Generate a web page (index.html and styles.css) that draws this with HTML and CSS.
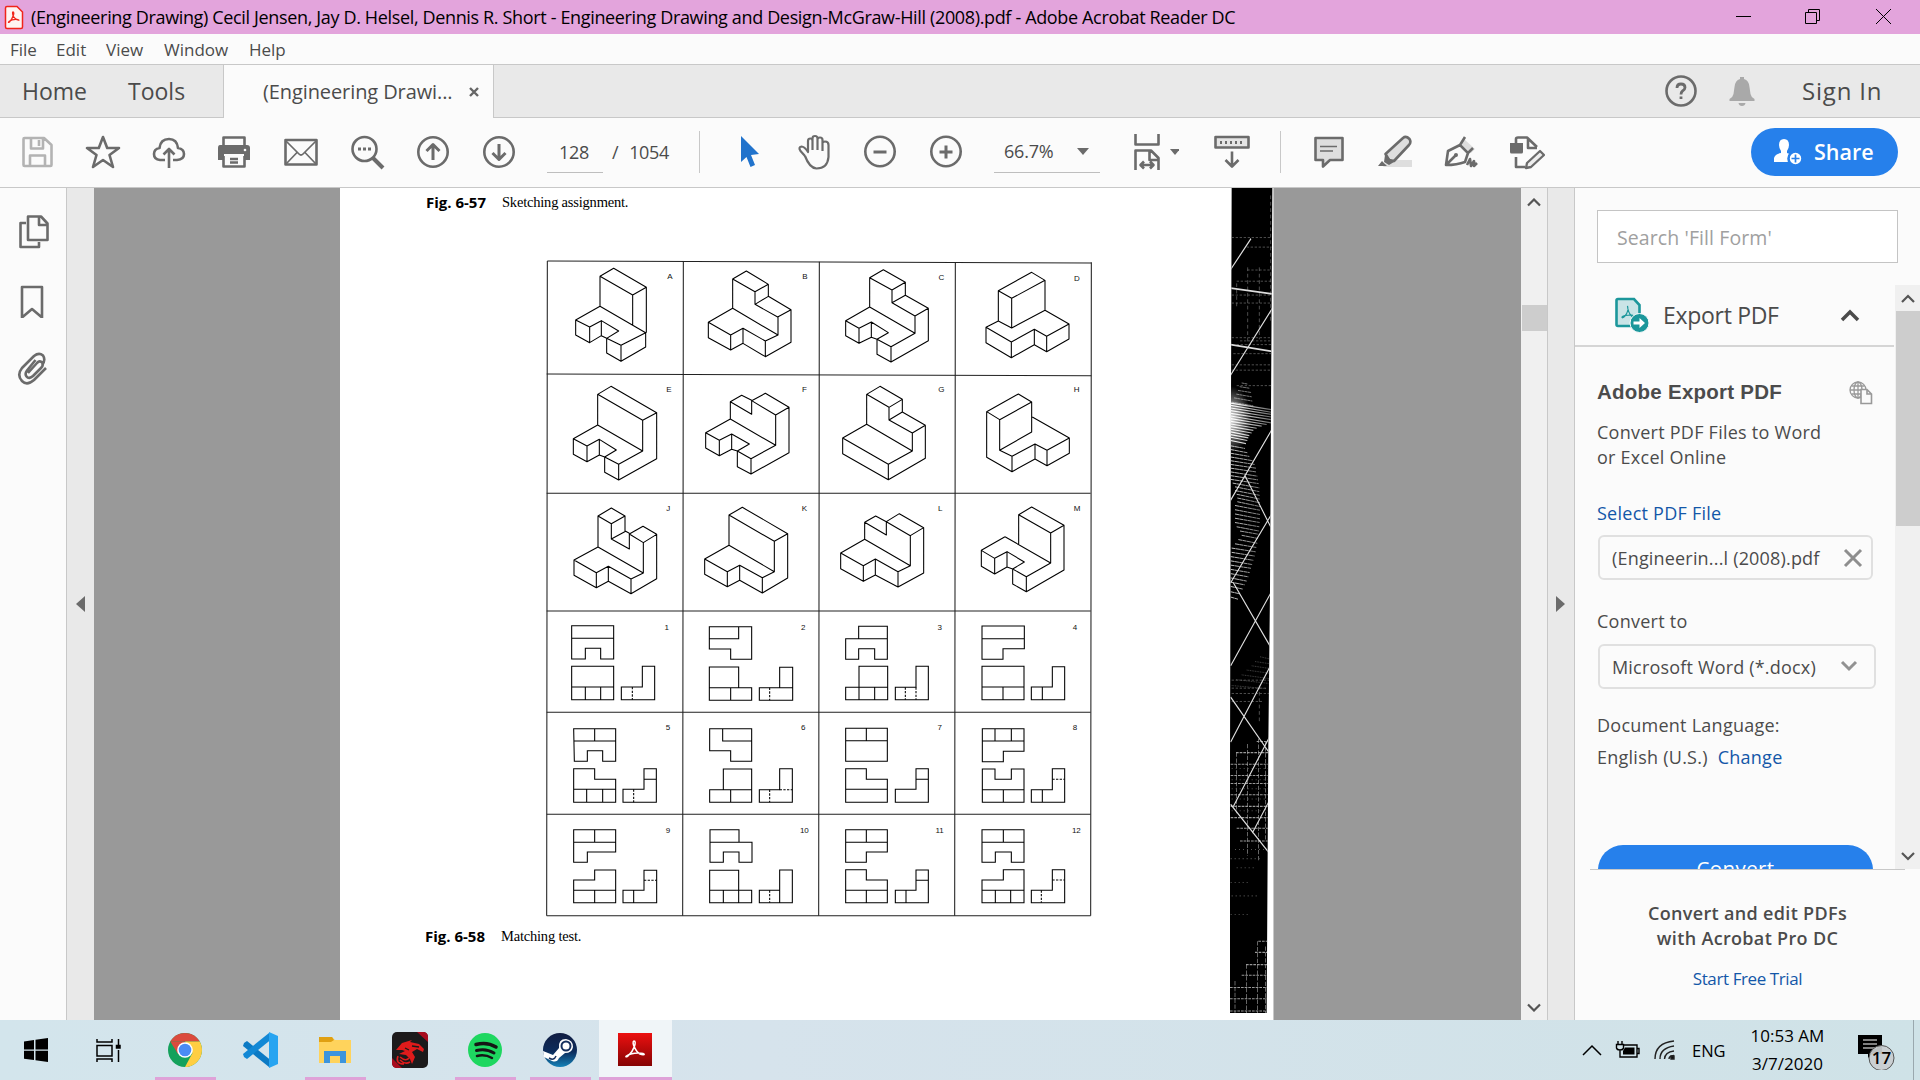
FILE: index.html
```html
<!DOCTYPE html>
<html lang="en">
<head>
  <meta charset="UTF-8" />
  <title>Adobe Acrobat Reader DC</title>
  <link rel="stylesheet" href="styles.css">
</head>
<body>
  <header class="titlebar">
    <svg class="app-icon" width="20" height="25" viewBox="0 0 20 25"><path d="M3 1.500H13L18.500 7V22Q18.500 23.500 17 23.500H3Q1.500 23.500 1.500 22V3Q1.500 1.500 3 1.500Z" fill="#fff4f2" stroke="#f0241b" stroke-width="1.500"/><path d="M9 7C11 7 9 13 5.500 17C3 19 5 14 13 14.500C18 15.500 12 16 9.500 11.500C8.500 9.500 8.300 7 9 7Z" fill="none" stroke="#f0241b" stroke-width="1.300"/></svg>
    <span class="title">(Engineering Drawing) Cecil Jensen, Jay D. Helsel, Dennis R. Short - Engineering Drawing and Design-McGraw-Hill (2008).pdf - Adobe Acrobat Reader DC</span>
    <svg class="win-buttons" width="190" height="34" fill="none" stroke="#000"><path d="M16 16.500H31M85.500 12.500H96.500V23.500H85.500ZM88.500 12V9.500H99.500V20.500H97M156 9L171 24M171 9L156 24"/></svg>
  </header>

  <nav class="menubar">
    <span class="m-file">File</span><span class="m-edit">Edit</span><span class="m-view">View</span><span class="m-window">Window</span><span class="m-help">Help</span>
  </nav>

  <div class="tabs">
    <span class="home">Home</span>
    <span class="tools">Tools</span>
    <div class="tab"><span>(Engineering Drawi...</span>
      <svg width="12" height="12" stroke="#666" stroke-width="2.400"><path d="M2 2L10 10M10 2L2 10"/></svg>
    </div>
    <div class="account">
      <svg width="34" height="34" fill="none" stroke="#6b6b6b" stroke-width="2.600"><circle cx="17" cy="17" r="14.500"/><path d="M13 14Q13 10 17 10Q21 10 21 13.500Q21 15.500 18.500 17Q17 18 17 20.500M17 22.500V25" stroke-width="2.800"/></svg>
      <svg width="28" height="34" fill="#a9a9a9"><path d="M12 3H16V5Q21 6.500 21.500 13L22.500 20Q23 23 26.500 25V27H1.500V25Q5 23 5.500 20L6.500 13Q7 6.500 12 5ZM10.500 29H17.500Q17 32 14 32Q11 32 10.500 29Z"/></svg>
      <span class="signin">Sign In</span>
    </div>
  </div>

  <div class="toolbar">
    <div class="tool-group first">
      <svg viewBox="0 0 36 36" class="disabled"><path d="M4.500 5Q4.500 4 5.500 4H25L32.500 11V31Q32.500 32 31.500 32H5.500Q4.500 32 4.500 31ZM12 4V14.500H24V4M20 6V12M11 32V21.500H26V32"/></svg>
      <svg viewBox="0 0 36 36"><path d="M18 3L22.200 14H34L24.500 21L28 33L18 26L8 33L11.500 21L2 14H13.800Z"/></svg>
      <svg viewBox="0 0 36 36"><path d="M14 26H9Q3 25.500 3 20Q3 15 8.500 14Q9.500 5 18 5Q26 5 27 14Q33 15 33 20Q33 25.500 26 26H22M18 34V15M12.500 20.500L18 15L23.500 20.500"/></svg>
      <svg viewBox="1 0 36 36"><path class="solid" d="M4 11Q2 11 2 14V26H8V20H28V26H34V14Q34 11 31 11Z"/><path d="M7.500 12V3.500H28.500V12M7.500 22V32.500H28.500V22M14 25H22M14 28.500H22"/><circle cx="29" cy="16" r="1.300" fill="#fbfbfb" stroke="none"/></svg>
      <svg viewBox="0 0 36 36"><path d="M2.500 6H33.500V30.500H2.500Z"/><path class="thin" d="M3 7L16 20Q18 22 20 20L33 7M3 30L14 18.500M33 30L22 18.500"/></svg>
      <svg viewBox="0 0 36 36"><circle cx="15.500" cy="15" r="12"/><path d="M24 24L34 34" stroke-width="4"/><path class="solid" d="M9 13.500h3v3H9zm5 0h3v3h-3zm5 0h3v3h-3z"/></svg>
      <svg viewBox="0 0 36 36"><circle cx="18" cy="18" r="14.700"/><path d="M18 26V11M11.500 17L18 10.500L24.500 17" stroke-width="3"/></svg>
      <svg viewBox="0 0 36 36"><circle cx="18" cy="18" r="14.700"/><path d="M18 10V25M11.500 19L18 25.500L24.500 19" stroke-width="3"/></svg>
    </div>
    <div class="page-number">128</div>
    <div class="page-count"><span>/</span><span>1054</span></div>
    <div class="tool-group middle">
      <svg viewBox="-2 0 36 36"><path d="M9 2L27 20L19 21L23 31L18.500 33L14.500 23L9 28Z" fill="#2173cc" stroke="none"/></svg>
      <svg viewBox="-1.500 0 36 36"><path class="hand" d="M7.500 22L3 17Q.500 13 4 12.500Q7 12.500 10.500 18V7Q10.500 4.500 13 4.500Q15 4.500 15 7V16M15 16V4.500Q15 2 17.500 2Q20 2 20 4.500V16M20 5.500Q20 3.500 22.500 3.500Q25 3.500 25 6V17M25 9Q25 7.500 27.500 7.500Q31 7.500 31 11V23Q30 34.500 19 34.500Q12 34 7.500 22"/></svg>
      <svg viewBox="0 0 36 36"><circle cx="18" cy="17.500" r="14.700"/><path d="M11.500 18H24.500" stroke-width="3"/></svg>
      <svg viewBox="0 0 36 36"><circle cx="18" cy="17.500" r="14.700"/><path d="M11.500 18H24.500M18 11.500V24.500" stroke-width="3"/></svg>
    </div>
    <div class="zoom"><span>66.7%</span><i class="caret"></i></div>
    <svg class="fit" width="46" height="38" viewBox="0 0 46 38"><path d="M2.500 1V11.500H25.500V1M2.500 37V17.500H18L25.500 25V37M16.500 18V27H25M8 32H20M11 28.500L7.500 32L11 35.500M17 28.500L20.500 32L17 35.500"/><path d="M37 16H47L42 22Z" class="solid"/></svg>
    <svg class="keyboard" width="38" height="38" viewBox="0 0 38 38"><path fill="#e5e5e5" d="M2.500 4H35.500V14.500H2.500Z"/><path d="M7 9.500H31" stroke-dasharray="2 3" stroke-width="3"/><path d="M19 18.500V33M12.500 27L19 33.500L25.500 27"/></svg>
    <div class="tool-group last">
      <svg viewBox="0 0 36 36"><path fill="#dedede" d="M4.500 4H31.500V26H19L12 32.500V26H4.500Z"/><path class="thin" d="M9 12.500H26M9 17H22"/></svg>
      <svg viewBox="0 0 36 36"><path d="M11 26H35V33H6Z" fill="#dedede" stroke="none"/><path fill="#dedede" d="M8.500 20L26 4Q29 1.500 32.500 5Q34.500 8 32 11L17 27L12 26Z"/><path class="solid" d="M8 21L17 28L12 31L7 28ZM5 27L10 32H1Z"/></svg>
      <svg viewBox="1 0 36 36"><path fill="#dedede" stroke="none" d="M22 5L33 15L29 19L19 10Z"/><path d="M4 31L6 17L18 11L26 19L23 28Q15 31 4 31ZM5 30L14 21M18 11L23 3M26 19L31 14M25 31L28 25L29 32L32 27L32 32L35 29"/><circle class="solid" cx="14" cy="21" r="2"/></svg>
      <svg viewBox="1 0 36 36"><path d="M8 9V5Q8 3.500 10 3.500H19L29 13M20 4V14H29M8 23V33H17"/><path class="solid" d="M2 9H15V18Q15 19.500 13.500 19.500H3.500Q2 19.500 2 18Z"/><path fill="#eee" d="M19 29L32 17L36 21L23 33L18 34Z" stroke-width="2.300"/></svg>
    </div>
    <button class="share">
      <svg width="30" height="28" viewBox="0 0 30 28"><path fill="#fff" d="M10 1Q15 1 15 7Q15 10 13 13V15Q17 16 18 18Q15 20 15 24H0V20Q1 16 7 15V13Q5 10 5 7Q5 1 10 1Z"/><circle cx="21.500" cy="20.500" r="7" fill="#fff" stroke="#2680eb"/><path d="M21.500 16.500V24.500M17.500 20.500H25.500" stroke="#2680eb" stroke-width="1.700"/></svg>
      <span>Share</span>
    </button>
  </div>

  <main class="workspace">
    <aside class="rail">
      <svg width="34" height="36" viewBox="0 0 34 36"><path d="M9 10H3.500V34H22V29M11 3.500H24L30.500 10.500V27H11ZM22 4V12H30"/></svg>
      <svg width="34" height="36" viewBox="0 -2 34 36"><path d="M5 3H25V33.500L15 25L5 33.500Z"/></svg>
      <svg width="34" height="36" viewBox="0 0 34 36"><path d="M11 22L20 12Q23 9 25 11.500Q27 14 24 17L16 25Q12 28.500 9.500 25.500Q7.500 23 10 19.500L18.500 9M29 17L17 29Q10 35 5 30Q-.500 24 5 17L17 5Q22 1 26 4.500Q29 9 25 14" /></svg>
    </aside>
    <div class="strip"><i class="arrow-left"></i></div>

    <section class="viewer">
      <article class="page">
        <div class="sheet">
          <p class="caption top"><b>Fig. 6-57</b><span>Sketching assignment.</span></p>
          <svg class="figure" width="560" height="670" viewBox="0 0 1680 2010">
            <!-- table rules -->
            <g class="rules">
              <path d="M22 18L1654 24M20 357L1654 362M20 715H1652M20 1068H1652M20 1372H1652M20 1678H1652M20 1982H1652"/>
              <path d="M22 18L20 1982M430 19L428 1982M838 20L836 1982M1246 21L1244 1982M1654 22L1652 1982"/>
            </g>
            <!-- pictorial views, first two columns -->
            <g class="solids">
              <path d="M180 64L221 40L319 97L278 120ZM180 64V154L107 195V240L149 263V216L107 195M180 154L317 233V276L243 319V271L317 233M319 97V233M278 120V209M149 216L184 197V242L149 263M184 197L236 228L200 250V294L243 319M200 250L243 271M184 242L200 250"/>
              <path d="M578 72L619 48L685 88L645 110ZM645 110V148L713 186L753 164L685 124L645 148M685 88V124M578 72V160L505 202V248L572 285V240L505 202M578 160L714 240V186M753 164V262L676 305V258L714 240M572 240L609 220L676 258M572 285L609 265L676 305M609 220V265"/>
              <path d="M173 418L213 394L350 473L308 496ZM173 418V510L100 551V598L141 620V573L100 551M173 510L308 588V496M350 473V611L236 675V628L308 588M141 573L178 553V600L141 620M178 553L229 585L194 606V652L236 675M194 606L236 628M178 600L194 606"/>
              <path d="M571 440L605 421L635 436V478L571 440V492L497 533V579L538 602V556L497 533M635 437L676 415L747 457L707 480ZM707 480V571L571 492M747 457V593L633 657V611L707 571M538 556L575 537V583L538 602M575 537L628 567L592 588V635L633 657M592 588L633 611M575 583L592 588"/>
              <path d="M174 783L214 759L255 783L214 806ZM214 806V852L268 882V837L310 863L350 838L309 814L268 837M255 783V830M214 852L257 829L268 835M174 783V876L102 915V961L169 998V953L102 915M174 876L310 954V863M350 838V971L273 1016V972L310 954M169 953L205 934L273 972M169 998L205 979L273 1016M205 934V979"/>
              <path d="M567 780L607 757L743 836L703 859ZM567 780V871L494 912V958L562 995V950L494 912M567 871L703 950V859M743 836V969L667 1014V968L703 950M562 950L599 931L667 968M562 995L599 976L667 1014M599 931V976"/>
            </g>
            <!-- last two columns -->
            <g class="solids" transform="translate(825 0)">
              <path d="M164 68L205 44L271 82L231 105ZM271 82V121L231 143V105M231 143L300 183L340 160L271 121M164 68V156L92 197V242L132 265V220L92 197M164 156L300 235V183M340 160V257L228 321V275L300 235M132 220L169 201V247L132 265M169 201L220 233L186 253V298L228 321M186 253L228 275M169 247L186 253"/>
              <path d="M550 107L650 52L690 76L590 130ZM550 107V198L590 219V130M690 76V166L590 219M550 198L513 217V263L589 308V261L513 217M690 166L762 207V252L695 290V244L762 207M589 261L658 223L695 244M589 308L658 269L695 290M658 223V269"/>
              <path d="M155 418L195 394L262 433L222 457ZM262 433V471L222 495V457M222 495L292 534L331 511L262 471M155 418V508L83 549V596L220 674V628L83 549M155 508L292 588V534M331 511V610L220 674M220 628L292 588"/>
              <path d="M515 470L610 417L650 441L554 494ZM515 470V607L591 650V604L554 586V494M650 441V531L554 586M652 486L763 549V595L696 632V586L763 549M591 604L660 567L696 586M591 650L660 612L696 632M660 567V612"/>
              <path d="M149 802L182 783L214 800V840L149 802V853L77 894V941L145 979V932L77 894M214 800L253 776L326 818L286 842ZM286 842V932L149 853M326 818V954L249 996V950L286 932M145 932L181 912L249 950M145 979L181 960L249 996M181 912V960"/>
              <path d="M611 779L650 756L747 811L707 834ZM611 779V867M570 845L707 924V834M570 845L499 886V934L539 957V910L499 886M747 811V945L634 1010V965L707 924M539 910L576 890V936L539 957M576 890L628 921L593 942V987L634 1010M593 942L634 965M576 936L593 942"/>
            </g>
            <!-- orthographic views -->
            <g class="ortho" transform="translate(0 1050)">
              <path d="M95 62H221V162H182V130H136V162H95ZM95 100H221M95 184H221V284H95ZM95 246H221M136 246V284M182 246V284M307 184H344V284H244V246H307Z"/>
              <path d="M508 65H635V163H572V132H508ZM508 101H596V65M596 248V186H508V286H635V248H508M572 248V286M719 187H758V286H658V248H719ZM719 248H758"/>
              <path d="M101 371H227V469H188V437H142V469H103ZM103 408H227M164 371V408M101 491H164V523H227V592H101ZM101 553H227M140 553V592M188 553V592M312 491H349V592H249V553H312ZM312 523H349"/>
              <path d="M509 371H635V469H572V437H509ZM548 371V408H635M550 554V492H635V592H509V554H635M572 554V592M719 491H757V592H658V554H719Z"/>
              <path d="M101 674H227V741H142V772H101ZM101 712H227M164 674V712M101 825H164V795H227V893H101ZM101 856H227M164 856V893M312 796H350V893H249V856H312ZM281 856V893"/>
              <path d="M510 674H597V712H636V772H597V741H550V772H510ZM510 712H597M509 796H596V856H635V893H509ZM509 856H596M550 856V893M596 856V893M719 795H757V893H658V856H719ZM719 856V893"/>
              <path class="hidden-edge" d="M277 246V284M689 248V286M281 553V592M689 554V592M719 554H757M312 826H350M689 856V893"/>
            </g>
            <g class="ortho" transform="translate(825 1050)">
              <path d="M131 64H217V163H179V131H131V163H92V101H131ZM131 101H217M132 184H218V284H92V247H132ZM132 247H218M132 247V284M179 247V284M303 184H340V284H241V247H303Z"/>
              <path d="M501 63H628V131H564V163H501ZM501 101H628M501 184H627V284H501ZM501 246H627M564 246V284M712 185H749V284H649V246H712ZM682 246V284"/>
              <path d="M92 370H217V469H92ZM92 407H217M154 370V407M92 491H154V523H217V592H92ZM92 553H217M303 491H340V592H241V553H303ZM303 523H340"/>
              <path d="M502 371H627V439H565V470H502ZM502 408H627M540 371V408M589 371V408M502 492H540V523H589V492H627V592H502ZM502 554H627M565 554V592M712 491H749V592H649V554H712ZM682 554V592"/>
              <path d="M92 674H217V741H154V772H92ZM92 712H217M154 674V712M92 794H154V825H217V893H92ZM92 856H217M154 856V893M303 795H340V893H241V856H303ZM303 826H340M273 856V893"/>
              <path d="M501 674H627V772H589V741H541V772H501ZM501 712H627M565 674V712M501 825H565V794H627V893H501ZM501 856H627M541 856V893M587 856V893M712 794H749V893H649V856H712Z"/>
              <path class="hidden-edge" d="M271 247V284M303 247V284M712 523H749M679 856V893M712 825H749"/>
            </g>
            <g class="cell-labels">
              <text x="390" y="72">A</text><text x="795" y="72">B</text><text x="1204" y="75">C</text><text x="1611" y="77">D</text>
              <text x="387" y="410">E</text><text x="793" y="411">F</text><text x="1204" y="412">G</text><text x="1610" y="412">H</text>
              <text x="385" y="768">J</text><text x="793" y="768">K</text><text x="1201" y="769">L</text><text x="1611" y="769">M</text>
              <text x="380" y="1124">1</text><text x="790" y="1124">2</text><text x="1199" y="1124">3</text><text x="1605" y="1124">4</text>
              <text x="384" y="1425">5</text><text x="790" y="1425">6</text><text x="1199" y="1425">7</text><text x="1605" y="1425">8</text>
              <text x="384" y="1734">9</text><text x="793" y="1734">10</text><text x="1199" y="1734">11</text><text x="1609" y="1734">12</text>
            </g>
          </svg>
          <p class="caption bottom"><b>Fig. 6-58</b><span>Matching test.</span></p>
        </div>
        <svg class="scan-edge" width="43" height="832" viewBox="60 6 129 1562" preserveAspectRatio="none">
          <defs>
            <linearGradient id="glow" gradientUnits="userSpaceOnUse" x1="62" x2="186" y1="0" y2="0"><stop offset="0" stop-color="#fff"/><stop offset=".45" stop-color="#bbb"/><stop offset="1" stop-color="#666"/></linearGradient>
            <radialGradient id="flare" gradientUnits="userSpaceOnUse" cx="62" cy="440" r="62"><stop offset="0" stop-color="#fff" stop-opacity=".9"/><stop offset="1" stop-color="#fff" stop-opacity="0"/></radialGradient>
            <clipPath id="edge"><path d="M65 6H187L183 420L180 760L175 1050L170 1555H58L62 600Z"/></clipPath>
          </defs>
          <path d="M65 6H187L183 420L180 760L175 1050L170 1555H58L62 600Z"/>
          <g clip-path="url(#edge)" fill="none" stroke="#ddd">
            <!-- faint grids -->
            <g stroke="#777" stroke-width="1.500" stroke-dasharray="7 5">
              <path d="M65 99H180M110 117H185M112 160H185M80 181H185M65 207H185M65 222H180M65 287H185M90 293H185M80 300H185M70 317H185M65 338H185M65 348H185M80 377H185M65 930H178M65 945H170M65 955H180M65 970H160"/>
              <path d="M80 185V230M113 155V300M148 155V290M182 20V260M148 940V1010"/>
            </g>
            <g stroke="#999" stroke-width="2" stroke-dasharray="8 3">
              <path d="M140 1045H176M78 1066H176M62 1088H176M62 1109H176M62 1124H176M62 1145H176M62 1167H176M62 1188H176M80 1208H176M90 1232H175"/>
              <path d="M79 1066V1180M113 1050V1260M146 1040V1270M167 1045V1230"/>
              <path d="M145 1420H172M135 1441H172M108 1464H172M95 1484H172M60 1507H172M60 1528H172M60 1551H172M75 1495V1555M109 1464V1555M143 1420V1555M167 1430V1555"/>
            </g>
            <g stroke="#555" stroke-width="2" stroke-dasharray="3 9"><path d="M65 1096H175M65 1117H175M65 1134H175M65 1153H175M65 1175H175M75 1248H170M62 1265H150M80 1282H140M62 1310H120M65 1335H140M62 1370H120"/></g>
            <!-- hatched shading -->
            <path stroke="#aaa" stroke-width="1.600" stroke-dasharray="9 1" d="M95 372L112 374M89 379L119 382M84 386L124 390M79 393L125 398M72 400L127 406M65 408L130 415"/>
            <path stroke="url(#glow)" stroke-width="2.200" d="M62 410L184 422M62 414L184 427M62 419L184 431M62 424L184 436M62 429L184 441M62 434L184 447M62 439L170 450M62 444L155 453M62 449L140 457M62 454L130 461M62 459L125 466M62 464L118 471M62 469L115 475M62 474L112 480M62 480L108 486"/>
            <path stroke="url(#glow)" stroke-width="1.800" stroke-dasharray="12 1" d="M62 490L105 495M62 497L112 503M62 504L118 510M62 511L128 518M62 518L134 525M62 525L138 532M62 532L138 539M62 539L142 547M62 546L144 554M62 553L146 561M68 560L148 569M75 567L148 576M75 574L149 583M80 581L149 590M82 588L150 597M82 595L150 604M75 602L150 611M75 610L150 619M75 618L150 627M75 626L149 634M75 634L148 642M80 642L147 650M90 650L145 656M95 658L144 664M85 666L142 673M75 674L140 681M65 682L137 689M65 690L134 697M62 698L130 705M62 706L127 713M62 714L123 720M62 722L119 728M62 730L115 736M62 738L110 744M62 746L104 751M62 754L98 759M62 764L90 768M62 774L84 778"/>
            <path stroke="#777" stroke-width="1.200" stroke-dasharray="3 2" d="M150 886L178 890M135 895L178 899M125 903L178 908M110 911L178 917M95 920L178 927M78 929L175 936M65 940L170 946"/>
            <path fill="url(#flare)" stroke="none" d="M62 375H130V505H62Z"/>
            <!-- long construction lines -->
            <path stroke-width="3" d="M62 159L123 101M62 194L188 205M62 300L188 313M62 357L188 231M62 592L188 457M62 747L188 615M62 903L188 760M62 1046L188 895M70 1167L180 1035M127 1217L180 1154M105 546L182 642M70 747L182 868M62 962L182 1070M62 1163L182 1258"/>
          </g>
        </svg>
      </article>
    </section>
    <div class="scrollbar">
      <svg width="14" height="9"><path d="M1 7.500L7 1.500L13 7.500"/></svg>
      <i class="thumb"></i>
      <svg width="14" height="9"><path d="M1 1.500L7 7.500L13 1.500"/></svg>
    </div>
    <div class="strip right"><i class="arrow-right"></i></div>

    <aside class="panel">
      <div class="search">Search 'Fill Form'</div>
      <div class="panel-body">
        <div class="panel-scroll">
          <div class="export-head">
            <svg width="34" height="36" viewBox="0 0 34 36"><path d="M3 2H19L24.500 8V29H3Q1.500 29 1.500 27.500V3.500Q1.500 2 3 2Z" fill="#c9e4e6" stroke="#1c979b" stroke-width="2.600"/><path d="M12.500 9Q14 14 10 19Q7 22 7 20Q8 18 17 18Q20 19 17 19.500Q13 16 12.500 9Z" fill="none" stroke="#1c979b" stroke-width="1.200"/><circle cx="24.500" cy="26" r="9.500" fill="#1c979b" stroke="#fbfbfb"/><path d="M18.500 24.500H24.500V21L30 26L24.500 31V27.500H18.500Z" fill="#fff"/></svg>
            <span>Export PDF</span>
            <svg class="collapse" width="20" height="13"><path d="M2 11L10 3L18 11" fill="none" stroke="#4b4b4b" stroke-width="3.500"/></svg>
          </div>
          <div class="export-form">
            <div class="export-title"><b>Adobe Export PDF</b>
              <svg width="24" height="24" fill="none" stroke="#999" stroke-width="1.300"><circle cx="9" cy="9" r="8"/><ellipse cx="9" cy="9" rx="4" ry="8"/><path d="M9 1V17M1 9H17M2.500 5H15.500M2.500 13H15.500"/><path d="M12 8.500H18L22.500 13V22.500H12ZM18 9V13H22" fill="#fbfbfb" stroke-width="1.600"/></svg>
            </div>
            <p class="intro">Convert PDF Files to Word<br>or Excel Online</p>
            <a class="select-file">Select PDF File</a>
            <div class="field file"><span>(Engineerin...l (2008).pdf</span>
              <svg width="20" height="20" stroke="#8e8e8e" stroke-width="3"><path d="M2 2L18 18M18 2L2 18"/></svg></div>
            <label>Convert to</label>
            <div class="field format"><span>Microsoft Word (*.docx)</span>
              <svg width="18" height="13" fill="none" stroke="#929292" stroke-width="3"><path d="M2 2L9 9L16 2"/></svg></div>
            <p class="language">Document Language:</p>
            <p class="language second">English (U.S.) <a>Change</a></p>
            <button class="convert">Convert</button>
          </div>
        </div>
        <div class="panel-bar">
          <svg width="14" height="10"><path d="M1 8L7 2L13 8"/></svg>
          <i class="thumb"></i>
          <svg width="14" height="10"><path d="M1 2L7 8L13 2"/></svg>
        </div>
      </div>
      <div class="promo">
        <b>Convert and edit PDFs<br>with Acrobat Pro DC</b>
        <a>Start Free Trial</a>
      </div>
    </aside>
  </main>

  <footer class="taskbar">
    <div class="task start"><svg width="24" height="24"><path d="M0 3.500L10 2V11.500H0ZM11.500 1.800L24 0V11.500H11.500ZM0 12.800H10V22L0 20.700ZM11.500 12.800H24V24L11.500 22.200Z"/></svg></div>
    <div class="task view"><svg width="26" height="25" fill="none" stroke="#000" stroke-width="1.500"><path d="M1 1V4H16V1M1 7.500H16V18H1ZM1 24V21H16V24M22.500 1V7M22.500 12V24"/><path d="M20.500 7.500H24V10H20.500Z" fill="#000"/></svg></div>
    <div class="task running"><svg width="34" height="34" viewBox="0 0 34 34"><circle cx="17" cy="17" r="17" fill="#14a15c"/><path d="M2.300 8.500A17 17 0 0 1 31.700 8.500H17Z" fill="#db4a3d"/><path d="M2.300 8.500L10 21L17 8.500Z" fill="#db4a3d"/><path d="M31.700 8.500A17 17 0 0 1 17 34L24.500 20L17 8.500Z" fill="#ffce42"/><circle cx="17" cy="17" r="7.800" fill="#fff"/><circle cx="17" cy="17" r="6.300" fill="#4a8bf5"/></svg></div>
    <div class="task"><svg width="36" height="36" viewBox="0 0 36 36"><path d="M2 11L5 9L31 30L27 35L1 14Z" fill="#0c7ac4"/><path d="M2 25L5 27L31 6L27 1L1 22Z" fill="#1288d5"/><path d="M27 0L36 4V32L27 36Z" fill="#27a4f1"/></svg></div>
    <div class="task running"><svg width="32" height="27"><path d="M0 0H13L16 3H32V26H0Z" fill="#ffd35c"/><path d="M0 0H13L15 3L12 5H0Z" fill="#e0a012"/><path d="M5 14H27V26H21V19H11V26H5Z" fill="#3c94dc"/></svg></div>
    <div class="task"><svg width="36" height="36"><rect width="36" height="36" rx="5" fill="#1c1a1b"/><path d="M25 0H31Q36 0 36 5V10ZM0 26L10 36H5Q0 36 0 31Z" fill="#a90b1e"/><path d="M4 18L10 11L20 8L18 10L27 12L32 17L31 20L25 17L20 20L23 25L20 32L18 27L14 23L7 22L13 19L10 18Z" fill="#e01b1b"/><path d="M6 24Q3 32 12 32M8 25Q14 30 17 26M8 28Q13 33 18 30" fill="none" stroke="#e01b1b" stroke-width="1.600"/><path d="M20 14L27 15M17 18L13 16" stroke="#1c1a1b" stroke-width="1.300"/></svg></div>
    <div class="task running"><svg width="34" height="34" fill="none" stroke="#151515" stroke-linecap="round"><circle cx="17" cy="17" r="17" fill="#1ed760" stroke="none"/><path d="M8 11.500Q19 8.500 28 14" stroke-width="3.500"/><path d="M8.500 17.500Q18 15 26 20" stroke-width="3"/><path d="M9 23Q17 21 24 25" stroke-width="2.500"/></svg></div>
    <div class="task running"><svg width="36" height="34"><defs><linearGradient id="steam" x2="0" y2="1"><stop stop-color="#111d42"/><stop offset=".55" stop-color="#0c2c5c"/><stop offset="1" stop-color="#1582b8"/></linearGradient></defs><circle cx="18" cy="17" r="17" fill="url(#steam)"/><path d="M1 18L11 22L17 15Q16 6 24 6Q31 7 31 14Q30 20 23 20L17 25Q15 30 10 28L2 24Z" fill="#fff"/><circle cx="24" cy="13" r="4.500" fill="#fff" stroke="#17315f" stroke-width="2"/><path d="M7 25Q12 28 14 23" fill="none" stroke="#17315f" stroke-width="1.500"/></svg></div>
    <div class="task running active"><svg width="34" height="34"><defs><linearGradient id="adobe" x2="0" y2="1"><stop stop-color="#ec1010"/><stop offset="1" stop-color="#850303"/></linearGradient></defs><rect width="34" height="33" fill="url(#adobe)"/><path d="M16 8C19 8 16 18 10 23C5 26 9 20 20 20C29 20 27 23 22 21C18 19 13 9 16 8Z" fill="none" stroke="#fff" stroke-width="1.500"/></svg></div>

    <div class="tray">
      <svg width="20" height="12" fill="none" stroke="#000" stroke-width="1.500"><path d="M1 11L10 2L19 11"/></svg>
      <svg width="26" height="20" fill="none" stroke="#000" stroke-width="1.400"><path d="M9 5H22V17H5V13M22 8.500H24V13.500H22M3 1V4M7 1V4M1.500 4.500H8.500V8Q8 10 5 10Q2 10 1.500 8ZM5 10V17"/><path d="M10 7.500H19.500V14.500H8V11Z" fill="#000" stroke="none"/></svg>
      <svg width="22" height="22" fill="none" stroke="#222" stroke-width="1.400"><path d="M1 20Q1 4 20 2M6 20Q6 9 20 7M10.500 20Q11 13 20 12M15 20Q15 17 20 16.500"/><path d="M17 17H20V20H17Z" fill="#111"/></svg>
      <span class="lang">ENG</span>
      <div class="clock"><span>10:53 AM</span><span>3/7/2020</span></div>
      <svg class="notify" width="40" height="40"><path d="M2 5H26V24H16L12 28V24H2Z"/><path d="M7 10H21M7 14H21M7 18H21" stroke="#fff" stroke-width="1.200"/><circle cx="25.500" cy="28" r="12.500" fill="#c9cdd0" fill-opacity=".93" stroke="#555"/><text x="25.500" y="34">17</text></svg>
      <i class="desktop-line"></i>
    </div>
  </footer>
</body>
</html>
```
FILE: styles.css
```css
* {
  box-sizing: border-box;
}

body {
  margin: 0;
  width: 1920px;
  height: 1080px;
  overflow: hidden;
  display: flex;
  flex-direction: column;
  font-family: "Open Sans", "Noto Sans", sans-serif;
  font-size: 18px;
  color: #4b4b4b;
  background: #fbfbfb;
}

p {
  margin: 0;
}

svg {
  display: block;
  flex: none;
}

span {
  white-space: nowrap;
}

a {
  color: #1357a8;
}

button {
  border: none;
  font-family: inherit;
  color: #fff;
  background: #2680eb;
}

/* title and menus */
.titlebar {
  height: 34px;
  display: flex;
  align-items: center;
  padding-left: 4px;
  background: #e3a4dc;
  color: #000;
}

.title {
  margin-left: 7px;
  font-size: 18px;
  letter-spacing: -0.35px;
}

.win-buttons {
  margin-left: auto;
  margin-right: 10px;
}

.menubar {
  height: 31px;
  display: flex;
  align-items: center;
  padding-left: 10px;
  border-bottom: 1px solid #c8c8c8;
  font-size: 17px;
}

.m-file { width: 46px; }
.m-edit { width: 50px; }
.m-view { width: 58px; }
.m-window { width: 85px; }

.tabs {
  height: 53px;
  display: flex;
  align-items: center;
  background: #e9e9e9;
  box-shadow: inset 0 -1px #c8c8c8;
  font-size: 23px;
}

.home {
  width: 106px;
  margin-left: 22px;
  padding-bottom: 2px;
}

.tools {
  width: 95px;
  padding-bottom: 2px;
}

.tab {
  width: 271px;
  height: 53px;
  display: flex;
  align-items: center;
  gap: 15px;
  padding-left: 39px;
  border-left: 1px solid #c8c8c8;
  border-right: 1px solid #c8c8c8;
  background: #fbfbfb;
  font-size: 20px;
  letter-spacing: -0.1px;
}

.tab span {
  width: 190px;
}

.account {
  display: flex;
  align-items: center;
  margin-left: auto;
  padding-right: 38px;
  padding-bottom: 2px;
}

.account svg + svg {
  margin-left: 30px;
}

.signin {
  width: 80px;
  margin-left: 46px;
  font-size: 24px;
  letter-spacing: 0.8px;
}

/* toolbar */
.toolbar {
  height: 70px;
  display: flex;
  align-items: center;
  padding-bottom: 2px;
  border-bottom: 1px solid #c8c8c8;
}

.toolbar svg {
  fill: none;
  stroke: #6b6b6b;
  stroke-width: 2.6;
  stroke-linejoin: round;
}

.toolbar .solid {
  fill: #6b6b6b;
  stroke: none;
}

.toolbar .thin {
  stroke-width: 1.7;
}

.toolbar .hand {
  stroke-width: 2.2;
}

.toolbar .disabled {
  stroke: #b3b3b3;
}

.tool-group {
  display: flex;
}

.tool-group svg {
  width: 36px;
  height: 36px;
  margin: 0 15px;
}

.first {
  margin-left: 4px;
}

.page-number {
  width: 56px;
  height: 42px;
  margin-left: 15px;
  padding-right: 2px;
  border-bottom: 1px solid #bebebe;
  line-height: 43px;
  text-align: center;
  letter-spacing: -0.3px;
}

.page-count {
  width: 97px;
  height: 42px;
  display: flex;
  gap: 11px;
  padding-left: 9px;
  border-right: 1px solid #c8c8c8;
  line-height: 43px;
  letter-spacing: -0.4px;
}

.middle {
  margin-left: 15px;
}

.zoom {
  width: 106px;
  height: 42px;
  display: flex;
  align-items: center;
  justify-content: space-between;
  margin-left: 15px;
  padding: 0 11px 0 10px;
  border-bottom: 1px solid #bebebe;
}

.zoom span {
  letter-spacing: -0.2px;
}

.caret {
  border: 6px solid transparent;
  border-top: 7px solid #6b6b6b;
  border-bottom: 0;
}

.fit {
  margin-left: 33px;
}

.keyboard {
  margin-left: 34px;
}

.last {
  height: 42px;
  align-items: center;
  margin-left: 29px;
  padding-left: 15px;
  border-left: 1px solid #c8c8c8;
}

.share {
  width: 147px;
  height: 48px;
  display: flex;
  align-items: center;
  gap: 10px;
  margin-left: auto;
  margin-right: 22px;
  padding: 0 0 0 23px;
  border-radius: 24px;
  font-size: 21.5px;
  font-weight: 600;
}

.share svg {
  stroke: none;
}

/* workspace */
.workspace {
  height: 832px;
  display: flex;
}

.rail {
  width: 67px;
  padding: 25px 0 0 17px;
  display: flex;
  flex-direction: column;
  gap: 33px;
  border-right: 1px solid #c8c8c8;
}

.rail svg {
  fill: none;
  stroke: #6b6b6b;
  stroke-width: 2.6;
  stroke-linejoin: round;
}

.strip {
  width: 27px;
  display: flex;
  align-items: center;
  justify-content: center;
  background: #e9e9e9;
}

.arrow-left {
  border: 8px solid transparent;
  border-right: 9px solid #6b6b6b;
  border-left: 0;
}

.arrow-right {
  border: 8px solid transparent;
  border-left: 9px solid #6b6b6b;
  border-right: 0;
}

.strip.right {
  width: 28px;
  padding-right: 2px;
  border-left: 1px solid #c8c8c8;
  border-right: 1px solid #c8c8c8;
}

.viewer {
  width: 1427px;
  padding-left: 246px;
  background: #999;
}

.page {
  width: 934px;
  height: 832px;
  display: flex;
  background: #fff;
  border-right: 1px solid #c8c8c8;
}

.sheet {
  width: 890px;
}

.caption {
  display: flex;
  font: 14.5px/20px "Liberation Serif", serif;
  color: #000;
}

.caption b {
  width: 76px;
  font: 700 15px/20px "Open Sans", sans-serif;
  white-space: nowrap;
}

.caption span {
  letter-spacing: -0.2px;
}

.top {
  height: 67px;
  padding: 4px 0 0 86px;
}

.bottom {
  padding: 1px 0 0 85px;
}

.figure {
  margin-left: 200px;
}

.figure path {
  fill: none;
  stroke: #000;
  stroke-width: 3.2;
}

.figure .solids path {
  stroke-linejoin: round;
}

.figure .rules path {
  stroke: #222;
}

.figure .hidden-edge {
  stroke-dasharray: 7 4;
}

.cell-labels text {
  font: 24px "Liberation Sans", sans-serif;
  fill: #111;
  text-anchor: middle;
}

.scrollbar {
  width: 26px;
  display: flex;
  flex-direction: column;
  align-items: center;
  padding: 10px 0 8px;
  background: #f0f0f0;
}

.scrollbar path,
.panel-bar path {
  fill: none;
  stroke: #555;
  stroke-width: 2.2;
}

.scrollbar .thumb {
  width: 25px;
  height: 26px;
  margin: 98px 0 auto;
  background: #cdcdcd;
}

/* tools panel */
.panel {
  width: 345px;
}

.search {
  width: 301px;
  height: 53px;
  margin: 22px 0 22px 22px;
  padding-left: 19px;
  border: 1px solid #c4c4c4;
  background: #fff;
  color: #a0a0a0;
  font-size: 19.5px;
  letter-spacing: 0.1px;
  line-height: 54px;
}

.panel-body {
  height: 584px;
  display: flex;
}

.panel-scroll {
  width: 320px;
  height: 584px;
  overflow: hidden;
}

.export-head {
  height: 62px;
  width: 319px;
  display: flex;
  align-items: center;
  padding: 0 34px 0 40px;
  border-bottom: 2px solid #d5d5d5;
  font-size: 23px;
}

.export-head span {
  margin-left: 14px;
  letter-spacing: -0.3px;
}

.collapse {
  margin-left: auto;
}

.export-form {
  padding-left: 22px;
  letter-spacing: 0.25px;
}

.export-title {
  width: 276px;
  height: 24px;
  display: flex;
  justify-content: space-between;
  margin-top: 34px;
  font: 20.5px/22px "Liberation Sans", sans-serif;
}

.intro {
  margin-top: 15px;
  line-height: 25px;
}

.select-file {
  display: block;
  margin-top: 31px;
  line-height: 25px;
}

.field {
  width: 275px;
  height: 45px;
  display: flex;
  align-items: center;
  justify-content: space-between;
  margin-left: 1px;
  padding: 0 8px 0 12px;
  border: 2px solid #e0e0e0;
  border-radius: 6px;
}

.field span {
  letter-spacing: 0.18px;
}

.file {
  margin-top: 9px;
}

.export-form label {
  display: block;
  margin-top: 29px;
  line-height: 25px;
}

.format {
  width: 278px;
  margin-top: 10px;
  padding-right: 16px;
}

.language {
  margin-top: 24px;
  line-height: 25px;
}

.second {
  margin-top: 7px;
}

.second a {
  margin-left: 5px;
}

.convert {
  display: block;
  width: 275px;
  height: 50px;
  margin: 75px 0 0 1px;
  padding: 0 0 4px;
  border-radius: 25px;
  font-size: 20.5px;
  letter-spacing: 0.4px;
  line-height: 46px;
}

.panel-bar {
  width: 25px;
  display: flex;
  flex-direction: column;
  align-items: center;
  padding: 9px 0 8px;
  background: #f0f0f0;
}

.panel-bar .thumb {
  width: 24px;
  height: 215px;
  margin: 7px 0 auto;
  background: #cdcdcd;
}

.promo {
  width: 315px;
  margin-left: 15px;
  padding-top: 31px;
  border-top: 1px solid #c8c8c8;
  text-align: center;
  line-height: 25px;
}

.promo b {
  display: block;
  font-weight: 600;
  letter-spacing: 0.33px;
}

.promo a {
  display: block;
  margin-top: 15px;
  font-size: 17px;
  letter-spacing: -0.4px;
}

/* taskbar */
.taskbar {
  height: 60px;
  display: flex;
  background: linear-gradient(90deg, #d3e5ec, #d6e3ec 40%, #cfe2e7);
  color: #000;
}

.task {
  width: 75px;
  padding: 0 8px 0 6px;
  display: flex;
  align-items: center;
  justify-content: center;
}

.start {
  width: 72px;
  padding: 0;
}

.view {
  width: 76px;
}

.running {
  background: linear-gradient(#dfa2d8, #dfa2d8) center bottom / 61px 3px no-repeat;
}

.active {
  background: linear-gradient(#dfa2d8, #dfa2d8) center bottom / 73px 3px no-repeat, #f0f5f8;
  width: 73px;
  margin-left: 1px;
}

.tray {
  display: flex;
  align-items: center;
  margin-left: auto;
}

.tray > svg + svg {
  margin-left: 13px;
}

.lang {
  width: 57px;
  margin-left: 16px;
  font-size: 16.5px;
}

.clock {
  width: 77px;
  display: flex;
  flex-direction: column;
  font-size: 17px;
  line-height: 28px;
  text-align: center;
}

.notify {
  margin-left: 30px;
}

.notify text {
  font: 600 17px "Open Sans", sans-serif;
  text-anchor: middle;
}

.desktop-line {
  width: 1px;
  height: 60px;
  margin: 0 6px 0 17px;
  background: #9aa8ae;
}
```
